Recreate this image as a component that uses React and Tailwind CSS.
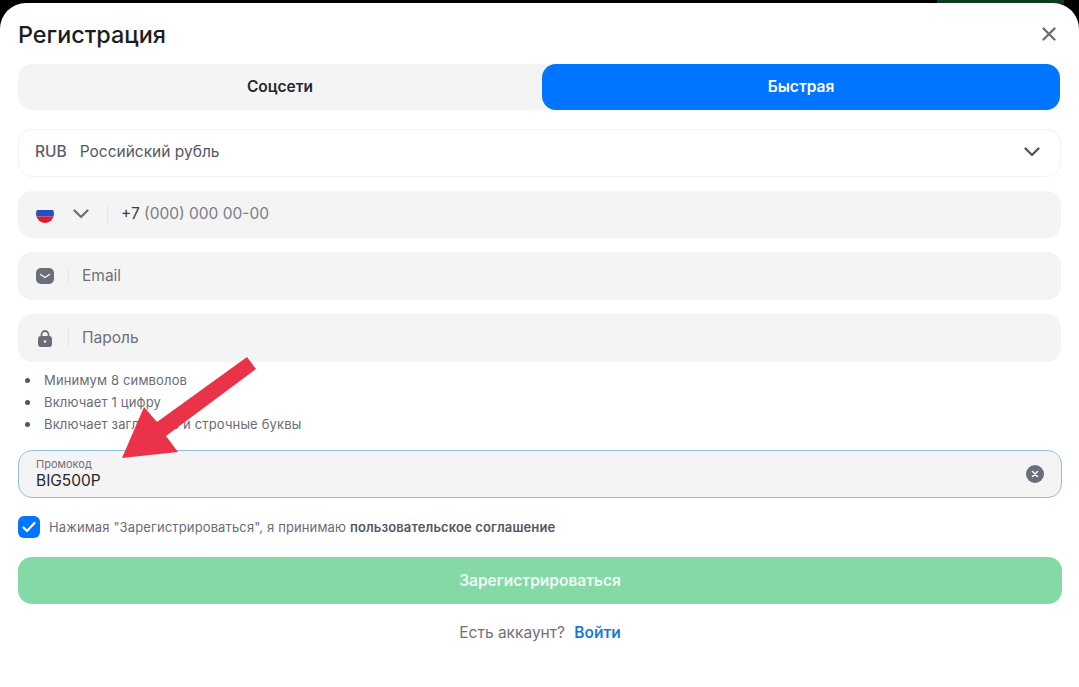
const FONT = "font-['Inter','Liberation_Sans',sans-serif]";

function Chevron({ className }) {
  return (
    <svg viewBox="0 0 16 10" className={className} fill="none" stroke="currentColor" strokeWidth="2.2" strokeLinecap="round" strokeLinejoin="round">
      <path d="M1.5 1.5 8 8l6.5-6.5" />
    </svg>
  );
}

function Field({ icon, children, dividerGap = "ml-[14px]", height = "h-12" }) {
  return (
    <div className={`mr-px flex items-center rounded-[14px] bg-[#f4f4f5] pl-[18px] ${height}`}>
      {icon}
      <div className={`h-[18px] w-px bg-[#e6e6e8] ${dividerGap}`} />
      {children}
    </div>
  );
}

export default function App() {
  return (
    <div className={`relative h-[687px] w-[1079px] overflow-hidden bg-black ${FONT}`}>
      <div className="absolute left-[937px] right-[15px] top-0 h-[4px] bg-[#0d3b1e]" />
      <div className="relative mt-[3px] flex h-[684px] flex-col rounded-t-[26px] bg-white pl-[18px] pr-[17px]">
        <div className="flex h-[61px] items-center justify-between">
          <h1 className="mt-[3px] text-[23.4px] font-medium leading-none text-[#1d1d20]">Регистрация</h1>
          <svg viewBox="0 0 14 14" className="mr-[6px] h-[14px] w-[14px] text-[#6b6d78]" fill="none" stroke="currentColor" strokeWidth="2.4" strokeLinecap="round">
            <path d="M1.5 1.5l11 11M12.5 1.500l-11 11" />
          </svg>
        </div>

        <div className="mr-[2px] grid h-[46px] grid-cols-[524px_1fr] rounded-[14px] bg-[#f4f4f5]">
          <div className="flex items-center justify-center text-[15.5px] font-semibold text-[#26262b]">Соцсети</div>
          <div className="flex items-center justify-center rounded-[14px] bg-[#0075ff] text-[15.5px] font-semibold text-white">Быстрая</div>
        </div>

        <div className="mr-px mt-[19px] flex h-12 items-center rounded-[14px] border border-[#f2f2f4] pb-[2px] pl-[16px] pr-[20px] text-[15.5px] text-[#55565f]">
          <span className="font-medium text-[#5d5e68]">RUB</span>
          <span className="ml-[13px] flex-1">Российский рубль</span>
          <Chevron className="h-[10px] w-[16px] text-[#4e4f59]" />
        </div>

        <div className="mt-[14px] flex flex-col gap-[14px]">
          <Field
            height="h-[47px] pb-px"
            dividerGap="ml-[18px]"
            icon={
              <>
                <svg viewBox="0 0 18 18" className="h-[18px] w-[18px]">
                  <defs>
                    <clipPath id="flag-clip">
                      <circle cx="9" cy="9" r="9" />
                    </clipPath>
                  </defs>
                  <g clipPath="url(#flag-clip)">
                    <rect width="18" height="5" fill="#f4f4f5" />
                    <rect y="5" width="18" height="6.500" fill="#2450c4" />
                    <rect y="11.500" width="18" height="6.500" fill="#e01b2f" />
                  </g>
                </svg>
                <Chevron className="ml-[19px] h-[10px] w-[16px] text-[#6b6d78]" />
              </>
            }
          >
            <span className="ml-[13px] text-[15.5px] text-[#7b7c86]"><span className="text-[#3c3d45]">+7</span> (000) 000 00-00</span>
          </Field>

          <Field
            icon={
              <svg viewBox="0 0 18 16" className="h-4 w-[18px]">
                <rect width="18" height="16" rx="5" fill="#6b6d78" />
                <path d="M4.500 6.500 9 9.500l4.500-3" fill="none" stroke="#f4f4f5" strokeWidth="1.500" strokeLinecap="round" strokeLinejoin="round" />
              </svg>
            }
          >
            <span className="ml-[13px] text-[15.5px] text-[#6f707b]">Email</span>
          </Field>

          <Field
            icon={
              <svg viewBox="0 0 18 18" className="h-[18px] w-[18px]">
                <path d="M5.500 8V5.500a3.500 3.500 0 0 1 7 0V8" fill="none" stroke="#6b6d78" strokeWidth="1.800" />
                <rect x="2" y="7" width="14" height="11" rx="3" fill="#6b6d78" />
                <circle cx="9" cy="12.500" r="1.200" fill="#f4f4f5" />
              </svg>
            }
          >
            <span className="ml-[13px] text-[15.5px] text-[#6f707b]">Пароль</span>
          </Field>
        </div>

        <ul className="mt-[7px] flex flex-col text-[13px] leading-[22px] tracking-[0.15px] text-[#6a6b76]">
          {["Минимум 8 символов", "Включает 1 цифру", "Включает заглавные и строчные буквы"].map((t) => (
            <li key={t} className="flex items-center">
              <span className="ml-[7px] h-[5px] w-[5px] rounded-full bg-[#55565f]" />
              <span className="ml-[14px]">{t}</span>
            </li>
          ))}
        </ul>

        <div className="mt-[15px] flex h-12 items-center rounded-[14px] border-[1.5px] border-[#8fbfe0] bg-[#f4f4f5] pl-[17px] pr-[17px]">
          <div className="flex-1 pt-px">
            <div className="text-[11px] leading-[13px] text-[#6f707b]">Промокод</div>
            <div className="text-[15.5px] leading-[20px] text-[#26262b]">BIG500P</div>
          </div>
          <svg viewBox="0 0 18 18" className="h-[18px] w-[18px]">
            <circle cx="9" cy="9" r="9" fill="#6b6d78" />
            <path d="M6.500 6.500l5 5M11.500 6.500l-5 5" stroke="#f4f4f5" strokeWidth="1.600" strokeLinecap="round" />
          </svg>
        </div>

        <div className="mt-[18px] flex h-[22px] items-center">
          <span className="flex h-[22px] w-[22px] items-center justify-center rounded-[6px] bg-[#0075ff]">
            <svg viewBox="0 0 14 12" className="h-[12px] w-[14px]" fill="none" stroke="#fff" strokeWidth="2.200" strokeLinecap="round" strokeLinejoin="round">
              <path d="M1.500 6.500 5 10l7.500-8" />
            </svg>
          </span>
          <span className="ml-[9px] pt-px text-[13px] tracking-[0.13px] text-[#6a6b76]">
            Нажимая "Зарегистрироваться", я принимаю <b className="font-semibold text-[#55565f]">пользовательское соглашение</b>
          </span>
        </div>

        <div className="mt-[19px] flex h-[47px] items-center justify-center rounded-[14px] bg-[#84d9a6] text-[15.5px] font-semibold text-[#f0faf4]">
          Зарегистрироваться
        </div>

        <div className="mt-[19px] text-center text-[15.5px] leading-[20px] text-[#6f707b]">
          Есть аккаунт? <span className="ml-[5px] font-semibold text-[#1a7ad1]">Войти</span>
        </div>
      </div>

      <svg className="absolute left-0 top-0 h-[687px] w-[1079px]" viewBox="0 0 1079 687">
        <polygon points="247,357 256,369 166,436 178,452 122,458 144,407 157,422" fill="#ea3349" />
      </svg>
    </div>
  );
}
